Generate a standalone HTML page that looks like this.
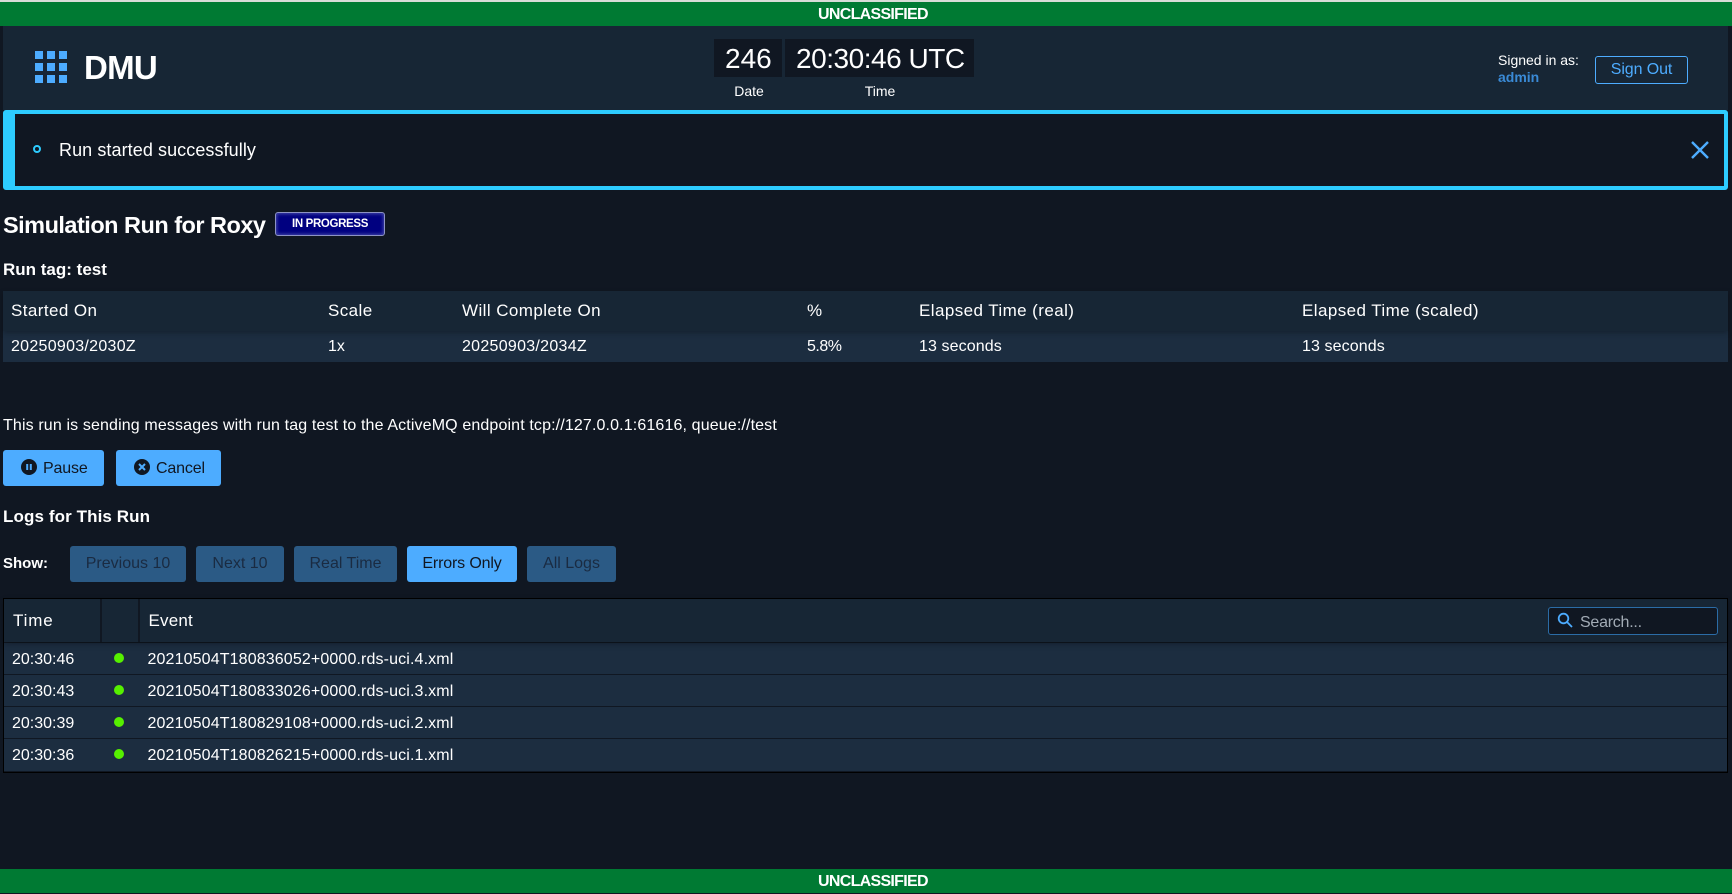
<!DOCTYPE html>
<html lang="en"><head><meta charset="utf-8"><title>DMU</title>
<style>
*{box-sizing:border-box;margin:0;padding:0}
html,body{width:1732px;height:894px;overflow:hidden;background:#101722}
body{position:relative;font-family:"Liberation Sans",Arial,sans-serif;color:#fff;font-size:16px}
.a,.t{position:absolute}
.t{white-space:nowrap;line-height:20px;height:20px}
.b{font-weight:700}
.btn{position:absolute;border-radius:3px;background:#4dacff}
.off{background:#2b5a85}
.bt{color:#101722}
.dim{color:#1a2b42}
.row{position:absolute;left:4px;width:1723px;height:32px;background:#1c2d40;border-bottom:1px solid #101722}
.dot{position:absolute;left:114px;width:10px;height:10px;border-radius:50%;background:#56f000}
.h{font-size:17px;letter-spacing:.42px}
.c{letter-spacing:.28px}
.e{letter-spacing:.13px}
</style></head><body>
<div class="a" style="left:0;top:0;width:1732px;height:2px;background:#d8dcd8"></div>
<div class="a" style="left:0;top:2px;width:1732px;height:24px;background:#007a33"></div>
<div class="t b" style="left:818px;top:5px;font-size:16px;letter-spacing:-.7px">UNCLASSIFIED</div>

<div class="a" style="left:3px;top:26px;width:1725px;height:84px;background:#172635"></div>
<svg class="a" style="left:35px;top:51px" width="32" height="32" viewBox="0 0 32 32" fill="#4dacff"><rect x="0" y="0" width="8" height="8"/><rect x="12" y="0" width="8" height="8"/><rect x="24" y="0" width="8" height="8"/><rect x="0" y="12" width="8" height="8"/><rect x="12" y="12" width="8" height="8"/><rect x="24" y="12" width="8" height="8"/><rect x="0" y="24" width="8" height="8"/><rect x="12" y="24" width="8" height="8"/><rect x="24" y="24" width="8" height="8"/></svg>
<div class="t b" style="left:84px;top:58px;font-size:33px;letter-spacing:-.7px">DMU</div>

<div class="a" style="left:714px;top:39px;width:68px;height:38px;background:#101722"></div>
<div class="a" style="left:785px;top:39px;width:189px;height:38px;background:#101722"></div>
<div class="t" style="left:725px;top:49px;font-size:28px;width:46px;text-align:center">246</div>
<div class="t" style="left:796px;top:49px;font-size:28px;letter-spacing:-.47px">20:30:46 UTC</div>
<div class="t" style="left:715px;top:81px;font-size:14px;width:68px;text-align:center">Date</div>
<div class="t" style="left:840px;top:81px;font-size:14px;width:80px;text-align:center">Time</div>

<div class="t" style="left:1498px;top:50px;font-size:14px">Signed in as:</div>
<div class="t b" style="left:1498px;top:67px;font-size:14px;color:#3a8ad6">admin</div>
<div class="a" style="left:1595px;top:56px;width:93px;height:28px;border:1px solid #4dacff;border-radius:3px"></div>
<div class="t" style="left:1595px;top:60px;width:93px;text-align:center;font-size:16px;color:#4dacff;letter-spacing:-.1px">Sign Out</div>

<div class="a" style="left:3px;top:110px;width:1725px;height:80px;border:4px solid #2dccff;border-left-width:12px;border-radius:3px;background:#101722"></div>
<div class="a" style="left:33px;top:145px;width:8px;height:8px;border:2px solid #2dccff;border-radius:50%"></div>
<div class="t" style="left:59px;top:140px;font-size:18px;letter-spacing:.08px">Run started successfully</div>
<svg class="a" style="left:1691px;top:141px" width="18" height="18" viewBox="0 0 18 18"><path d="M1 1L17 17M17 1L1 17" stroke="#4dacff" stroke-width="2.4" fill="none"/></svg>

<h1 class="t b" style="left:3px;top:215px;font-size:23.5px;letter-spacing:-.51px">Simulation Run for Roxy</h1>
<div class="a" style="left:275px;top:212px;width:110px;height:24px;background:#000080;border:1px solid #8d93c4;border-radius:3px;box-shadow:inset 0 0 3px 1px rgba(120,130,200,.55)"></div>
<div class="t b" style="left:275px;top:214px;width:110px;text-align:center;font-size:11.5px;letter-spacing:-.35px">IN PROGRESS</div>
<h2 class="t b" style="left:3px;top:260px;font-size:17px">Run tag: test</h2>

<div class="a" style="left:3px;top:331px;width:1725px;height:31px;background:#1c2d40"></div>
<div class="a" style="left:3px;top:291px;width:1725px;height:40px;background:#172635;box-shadow:0 2px 5px rgba(0,0,0,.25)"></div>
<div class="t h" style="left:11px;top:301px">Started On</div>
<div class="t h" style="left:328px;top:301px">Scale</div>
<div class="t h" style="left:462px;top:301px">Will Complete On</div>
<div class="t h" style="left:807px;top:301px">%</div>
<div class="t h" style="left:919px;top:301px">Elapsed Time (real)</div>
<div class="t h" style="left:1302px;top:301px">Elapsed Time (scaled)</div>
<div class="t c" style="left:11px;top:337px">20250903/2030Z</div>
<div class="t" style="left:328px;top:337px">1x</div>
<div class="t c" style="left:462px;top:337px">20250903/2034Z</div>
<div class="t" style="left:807px;top:337px;letter-spacing:-.5px">5.8%</div>
<div class="t" style="left:919px;top:337px;letter-spacing:.1px">13 seconds</div>
<div class="t" style="left:1302px;top:337px;letter-spacing:.1px">13 seconds</div>

<p class="t" style="left:3px;top:416px;letter-spacing:.134px">This run is sending messages with run tag test to the ActiveMQ endpoint tcp://127.0.0.1:61616, queue://test</p>

<div class="btn" style="left:3px;top:450px;width:101px;height:36px"></div>
<svg class="a" style="left:21px;top:459px" width="16" height="16" viewBox="0 0 16 16"><circle cx="8" cy="8" r="8" fill="#101722"/><rect x="5.2" y="5" width="2" height="6" fill="#4dacff"/><rect x="8.8" y="5" width="2" height="6" fill="#4dacff"/></svg>
<div class="t bt" style="left:43px;top:459px;letter-spacing:-.15px">Pause</div>
<div class="btn" style="left:116px;top:450px;width:105px;height:36px"></div>
<svg class="a" style="left:134px;top:459px" width="16" height="16" viewBox="0 0 16 16"><circle cx="8" cy="8" r="8" fill="#101722"/><path d="M5 5L11 11M11 5L5 11" stroke="#4dacff" stroke-width="2" fill="none"/></svg>
<div class="t bt" style="left:156px;top:459px;letter-spacing:-.15px">Cancel</div>

<h2 class="t b" style="left:3px;top:507px;font-size:17px;letter-spacing:.1px">Logs for This Run</h2>
<div class="t b" style="left:3px;top:554px;font-size:15px">Show:</div>
<div class="btn off" style="left:70px;top:546px;width:116px;height:36px"></div>
<div class="t dim" style="left:70px;top:554px;width:116px;text-align:center">Previous 10</div>
<div class="btn off" style="left:196px;top:546px;width:88px;height:36px"></div>
<div class="t dim" style="left:196px;top:554px;width:88px;text-align:center">Next 10</div>
<div class="btn off" style="left:294px;top:546px;width:103px;height:36px"></div>
<div class="t dim" style="left:294px;top:554px;width:103px;text-align:center">Real Time</div>
<div class="btn" style="left:407px;top:546px;width:110px;height:36px"></div>
<div class="t bt" style="left:407px;top:554px;width:110px;text-align:center;letter-spacing:-.15px">Errors Only</div>
<div class="btn off" style="left:527px;top:546px;width:89px;height:36px"></div>
<div class="t dim" style="left:527px;top:554px;width:89px;text-align:center">All Logs</div>

<div class="a" style="left:3px;top:598px;width:1725px;height:175px;border:1px solid #000;background:#101722"></div>
<div class="row" style="top:643px"></div>
<div class="row" style="top:675px"></div>
<div class="row" style="top:707px"></div>
<div class="row" style="top:739px;border-bottom:0"></div>
<div class="a" style="left:4px;top:599px;width:1723px;height:43px;background:#172635;box-shadow:0 2px 6px rgba(0,0,0,.3)"></div>
<div class="a" style="left:100px;top:599px;width:2px;height:43px;background:#101722"></div>
<div class="a" style="left:138px;top:599px;width:2px;height:43px;background:#101722"></div>
<div class="t" style="left:13px;top:611px;font-size:17px;letter-spacing:.85px">Time</div>
<div class="t" style="left:148.5px;top:611px;font-size:17px;letter-spacing:.2px">Event</div>
<div class="a" style="left:1548px;top:607px;width:170px;height:28px;background:#101722;border:1px solid #2b6ca6;border-radius:3px"></div>
<svg class="a" style="left:1557px;top:612px" width="16" height="16" viewBox="0 0 16 16" fill="none" stroke="#4dacff" stroke-width="1.8"><circle cx="6.5" cy="6.5" r="4.8"/><path d="M10 10L15 15"/></svg>
<div class="t" style="left:1580px;top:613px;color:#a2abb5;letter-spacing:-.25px">Search...</div>

<div class="t" style="left:12px;top:650px">20:30:46</div><div class="dot" style="top:653px"></div><div class="t e" style="left:147.5px;top:650px">20210504T180836052+0000.rds-uci.4.xml</div>
<div class="t" style="left:12px;top:682px">20:30:43</div><div class="dot" style="top:685px"></div><div class="t e" style="left:147.5px;top:682px">20210504T180833026+0000.rds-uci.3.xml</div>
<div class="t" style="left:12px;top:714px">20:30:39</div><div class="dot" style="top:717px"></div><div class="t e" style="left:147.5px;top:714px">20210504T180829108+0000.rds-uci.2.xml</div>
<div class="t" style="left:12px;top:746px">20:30:36</div><div class="dot" style="top:749px"></div><div class="t e" style="left:147.5px;top:746px">20210504T180826215+0000.rds-uci.1.xml</div>

<div class="a" style="left:0;top:869px;width:1732px;height:24px;background:#007a33"></div>
<div class="t b" style="left:818px;top:872px;font-size:16px;letter-spacing:-.7px">UNCLASSIFIED</div>
</body></html>
